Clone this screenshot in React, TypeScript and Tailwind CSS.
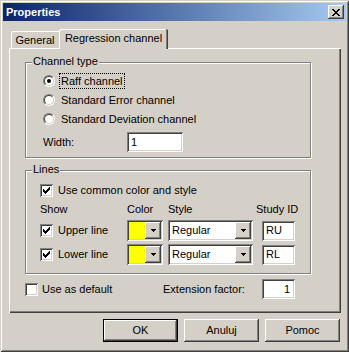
import React from "react";

const raised =
  "shadow-[inset_-1px_-1px_#404040,inset_1px_1px_#ffffff,inset_-2px_-2px_#808080,inset_2px_2px_#d4d0c8]";
const sunken =
  "shadow-[inset_1px_1px_#808080,inset_-1px_-1px_#ffffff,inset_2px_2px_#404040,inset_-2px_-2px_#d4d0c8]";

function Pixels({ rows }: { rows: string[] }) {
  return (
    <svg width={rows[0].length} height={rows.length} shapeRendering="crispEdges">
      {rows.flatMap((row, y) =>
        row.split("").map((c, x) =>
          c === "X" ? <rect key={`${x}-${y}`} x={x} y={y} width="1" height="1" fill="#000" /> : null
        )
      )}
    </svg>
  );
}

const CHECK = ["......X", ".....XX", "X...XXX", "XX.XXX.", "XXXXX..", ".XXX...", "..X...."];
const CROSS = ["XX....XX", ".XX..XX.", "..XXXX..", "...XX...", "..XXXX..", ".XX..XX.", "XX....XX"];
const ARROW = ["XXXXX", ".XXX.", "..X.."];

function CheckBox({ checked }: { checked?: boolean }) {
  return (
    <span className={`flex h-[13px] w-[13px] shrink-0 items-center justify-center bg-white ${sunken}`}>
      {checked && <Pixels rows={CHECK} />}
    </span>
  );
}

function Radio({ checked }: { checked?: boolean }) {
  return (
    <span className="flex h-[12px] w-[12px] shrink-0 items-center justify-center rounded-full border border-t-[#808080] border-l-[#808080] border-b-white border-r-white">
      <span className="flex h-[10px] w-[10px] items-center justify-center rounded-full border border-t-[#404040] border-l-[#404040] border-b-[#d4d0c8] border-r-[#d4d0c8] bg-white">
        {checked && <span className="h-[4px] w-[4px] rounded-full bg-black" />}
      </span>
    </span>
  );
}

function Combo({ className, fill, text }: { className: string; fill: string; text?: string }) {
  return (
    <div className={`flex h-[21px] p-[2px] bg-white ${sunken} ${className}`}>
      <div className={`flex flex-1 items-center pl-[2px] ${fill}`}>{text}</div>
      <div className={`flex w-[16px] items-center justify-center bg-[#d4d0c8] ${raised}`}>
        <Pixels rows={ARROW} />
      </div>
    </div>
  );
}

function GroupBox({ title, className, children }: { title: string; className: string; children: React.ReactNode }) {
  return (
    <div
      className={`relative border border-[#808080] shadow-[1px_1px_0_#ffffff,inset_1px_1px_0_#ffffff] ${className}`}
    >
      <span className="absolute -top-[8px] left-[6px] bg-[#d4d0c8] px-[1px]">{title}</span>
      {children}
    </div>
  );
}

export default function App() {
  return (
    <div className="flex h-[352px] w-[349px] flex-col bg-[#d4d0c8] font-['Liberation_Sans',Arial,sans-serif] text-[11px] leading-[13px] text-black shadow-[inset_1px_1px_#d4d0c8,inset_-1px_-1px_#404040,inset_2px_2px_#ffffff,inset_-2px_-2px_#808080]">
      {/* title bar */}
      <div className="mx-[3px] mt-[3px] flex h-[18px] items-center justify-between bg-[linear-gradient(to_right,#0a246a,#a6caf0)] pl-[3px] pr-[2px]">
        <span className="font-bold text-white">Properties</span>
        <span className={`flex h-[14px] w-[16px] items-center justify-center bg-[#d4d0c8] ${raised}`}>
          <Pixels rows={CROSS} />
        </span>
      </div>

      {/* tabs */}
      <div className="ml-[9px] mt-[8px] flex h-[19px] items-end">
        <div className="ml-[2px] h-[17px] w-[48px] rounded-tl-[2px] pt-[3px] text-center shadow-[inset_1px_1px_#ffffff]">
          General
        </div>
        <div className="relative z-10 -mb-[1px] h-[20px] w-[109px] rounded-t-[2px] bg-[#d4d0c8] pt-[3px] text-center shadow-[inset_-1px_0_#404040,inset_1px_1px_#ffffff,inset_-2px_0_#808080]">
          Regression channel
        </div>
      </div>

      {/* panel */}
      <div className="ml-[9px] h-[265px] w-[332px] shadow-[inset_1px_1px_#ffffff,inset_-1px_-1px_#404040,inset_-2px_-2px_#808080]">
        <GroupBox title="Channel type" className="ml-[16px] mt-[14px] w-[286px] pb-[5px] pl-[17px] pt-[8px]">
          {[
            ["Raff channel", true],
            ["Standard Error channel", false],
            ["Standard Deviation channel", false],
          ].map(([label, on]) => (
            <div key={label as string} className="flex h-[19px] items-center gap-[4px]">
              <Radio checked={on as boolean} />
              <span
                className={`border px-[1px] leading-[14px] ${on ? "border-dotted border-black" : "border-transparent"}`}
              >
                {label}
              </span>
            </div>
          ))}
          <div className="mt-[4px] flex h-[20px] items-center">
            <span className="w-[84px]">Width:</span>
            <div className={`flex h-[20px] w-[56px] items-center bg-white pl-[4px] ${sunken}`}>1</div>
          </div>
        </GroupBox>

        <GroupBox title="Lines" className="ml-[16px] mt-[12px] w-[286px] pb-[8px] pl-[14px] pt-[11px]">
          <div className="flex h-[17px] items-center gap-[5px]">
            <CheckBox checked />
            <span>Use common color and style</span>
          </div>
          <div className="mt-[3px] flex h-[14px] items-center">
            <span className="w-[87px]">Show</span>
            <span className="w-[41px]">Color</span>
            <span className="w-[88px]">Style</span>
            <span>Study ID</span>
          </div>
          {[
            ["Upper line", "RU", "mt-[4px]"],
            ["Lower line", "RL", "mt-[3px]"],
          ].map(([label, id, mt]) => (
            <div key={label} className={`flex h-[21px] items-center ${mt}`}>
              <div className="flex w-[87px] items-center gap-[5px]">
                <CheckBox checked />
                <span>{label}</span>
              </div>
              <div className="w-[41px]">
                <Combo className="w-[36px]" fill="bg-[#ffff00]" />
              </div>
              <div className="w-[88px]">
                <Combo className="w-[85px]" fill="bg-white" text="Regular" />
              </div>
              <div className={`ml-[6px] flex h-[20px] w-[33px] items-center bg-white pl-[4px] ${sunken}`}>{id}</div>
            </div>
          ))}
        </GroupBox>

        <div className="ml-[16px] mt-[5px] flex h-[20px] items-center">
          <div className="flex w-[138px] items-center gap-[4px]">
            <CheckBox />
            <span>Use as default</span>
          </div>
          <span className="w-[99px]">Extension factor:</span>
          <div className={`flex h-[20px] w-[33px] items-center justify-end bg-white pr-[5px] ${sunken}`}>1</div>
        </div>
      </div>

      {/* buttons */}
      <div className="mt-[6px] flex justify-end gap-[6px] pr-[9px]">
        <button className={`h-[23px] w-[75px] border border-black bg-[#d4d0c8] ${raised}`}>OK</button>
        <button className={`h-[23px] w-[75px] bg-[#d4d0c8] ${raised}`}>Anuluj</button>
        <button className={`h-[23px] w-[75px] bg-[#d4d0c8] ${raised}`}>Pomoc</button>
      </div>
    </div>
  );
}
